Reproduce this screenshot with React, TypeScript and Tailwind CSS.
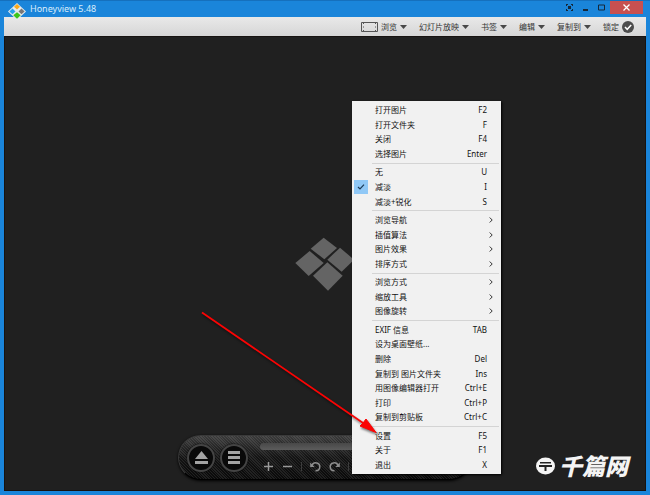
import { useState } from "react";
import clsx from "clsx";

interface MenuEntry {
  label: string;
  shortcut?: string;
  submenu?: boolean;
}

const menuGroups: MenuEntry[][] = [
  [
    { label: "打开图片", shortcut: "F2" },
    { label: "打开文件夹", shortcut: "F" },
    { label: "关闭", shortcut: "F4" },
    { label: "选择图片", shortcut: "Enter" },
  ],
  [
    { label: "无", shortcut: "U" },
    { label: "减淡", shortcut: "I" },
    { label: "减淡+锐化", shortcut: "S" },
  ],
  [
    { label: "浏览导航", submenu: true },
    { label: "插值算法", submenu: true },
    { label: "图片效果", submenu: true },
    { label: "排序方式", submenu: true },
  ],
  [
    { label: "浏览方式", submenu: true },
    { label: "缩放工具", submenu: true },
    { label: "图像旋转", submenu: true },
  ],
  [
    { label: "EXIF 信息", shortcut: "TAB" },
    { label: "设为桌面壁纸..." },
    { label: "删除", shortcut: "Del" },
    { label: "复制到 图片文件夹", shortcut: "Ins" },
    { label: "用图像编辑器打开", shortcut: "Ctrl+E" },
    { label: "打印", shortcut: "Ctrl+P" },
    { label: "复制到剪贴板", shortcut: "Ctrl+C" },
  ],
  [
    { label: "设置", shortcut: "F5" },
    { label: "关于", shortcut: "F1" },
    { label: "退出", shortcut: "X" },
  ],
];

const filters = ["无", "减淡", "减淡+锐化"];

function AppIcon() {
  return (
    <svg width="18" height="17" viewBox="0 0 18 17" aria-hidden="true">
      <path d="M9 0 18 8.500 9 17 0 8.500Z" fill="#e4eaee" />
      <path d="M9 1 12 3.800 9 6.600 6 3.800Z" fill="#f9a91c" />
      <path d="M4.500 5.500 7.500 8.400 4.500 11.300 1.400 8.400Z" fill="#26a3ee" />
      <path d="M13.500 5.500 16.600 8.400 13.500 11.300 10.500 8.400Z" fill="#777" />
      <path d="M9 9.200 12.700 12.300 9 15.700 5.300 12.300Z" fill="#3cc51c" />
    </svg>
  );
}

function TitleBar() {
  return (
    <header className="flex h-4 shrink-0 items-start justify-between pl-1">
      <div className="flex items-start gap-1">
        <div className="z-10 h-4 pt-[2px]">
          <AppIcon />
        </div>
        <h1 className="text-[9px] leading-4 text-[#d9ecfb]">Honeyview 5.48</h1>
      </div>
      <div className="flex items-center pr-[3px]">
        <button type="button" aria-label="Full screen" className="grid h-[13px] w-4 place-items-center">
          <svg width="7" height="7" viewBox="0 0 7 7" fill="#16283a">
            <path d="M0 0h2v1H1v1H0ZM5 0h2v2H6V1H5ZM0 5h1v1h1v1H0ZM6 5h1v2H5V6h1ZM2 2h3v3H2Z" />
          </svg>
        </button>
        <button type="button" aria-label="Minimize" className="grid h-[13px] w-4 place-items-center">
          <svg width="7" height="7" viewBox="0 0 7 7">
            <path d="M1 5h5v2H1Z" fill="#16283a" />
          </svg>
        </button>
        <button type="button" aria-label="Maximize" className="grid h-[13px] w-[17px] place-items-center">
          <svg width="7" height="7" viewBox="0 0 7 7">
            <path d="M.5 1v5h6V1Z" fill="none" stroke="#16283a" />
          </svg>
        </button>
        <button type="button" aria-label="Close" className="grid h-[13px] w-[33px] place-items-center bg-[#c75050]">
          <svg width="7" height="7" viewBox="0 0 7 7">
            <path d="m.5.5 6 6m0-6-6 6" stroke="#fff" strokeWidth="1.3" />
          </svg>
        </button>
      </div>
    </header>
  );
}

function ToolbarButton({ label, film }: { label: string; film?: boolean }) {
  return (
    <button type="button" className="flex items-center gap-[3px]">
      {film && (
        <svg width="17" height="10" viewBox="0 0 17 10" fill="none" stroke="#555">
          <path d="M.5.5h16v9H.5Z" />
          <path d="M2.5 1v8M14.5 1v8" strokeDasharray="1 2.5" />
        </svg>
      )}
      {label}
      <svg width="7" height="4" viewBox="0 0 7 4">
        <path d="M0 0h7L3.5 4Z" fill="#484848" />
      </svg>
    </button>
  );
}

function Toolbar() {
  return (
    <nav className="flex h-[19px] shrink-0 items-center justify-end gap-3 bg-linear-to-b from-[#e9e9e9] to-[#d6d6d6] pr-3 text-[8px] text-[#333]">
      <ToolbarButton label="浏览" film />
      <ToolbarButton label="幻灯片放映" />
      <ToolbarButton label="书签" />
      <ToolbarButton label="编辑" />
      <ToolbarButton label="复制到" />
      <button type="button" className="flex items-center gap-[3px]">
        锁定
        <svg width="12" height="12" viewBox="0 0 12 12">
          <circle cx="6" cy="6" r="6" fill="#4c4c4c" />
          <path d="m3 6 2.2 2.3L9.2 4" fill="none" stroke="#fff" strokeWidth="1.5" />
        </svg>
      </button>
    </nav>
  );
}

function EmptyLogo() {
  return (
    <svg
      className="col-start-1 row-start-1 place-self-center"
      width="60"
      height="54"
      viewBox="0 0 180 162"
      fill="#646464"
      aria-hidden="true"
    >
      <path d="M86 2 126 33 88 67 47 35Z" />
      <path d="M44 42 86 78 41 117 1 78Z" />
      <path d="M135 32 177 68 140 104 97 68Z" />
      <path d="M97 76 143 116 99 161 54 116Z" />
    </svg>
  );
}

const roundButton =
  "grid size-7 shrink-0 place-items-center rounded-full border-2 border-[#444] bg-[#090909] shadow-[0_0_2px_#000]";

function ControlPanel() {
  return (
    <div className="col-start-1 row-start-1 mb-[10px] flex h-[45px] w-[294px] items-center gap-[5px] self-end justify-self-center rounded-full border border-[#3a3a3a] border-b-black bg-[#0b0b0b] bg-[linear-gradient(to_bottom,rgba(255,255,255,0.2),rgba(255,255,255,0.04)_50%,rgba(255,255,255,0)),repeating-linear-gradient(45deg,#0a0a0a_0_1px,#1f1f1f_1px_2px)] px-2 shadow-[0_1px_3px_#000]">
      <button type="button" aria-label="Open" className={roundButton}>
        <svg width="13" height="13" viewBox="0 0 13 13" fill="#a3a3a3">
          <path d="M6.5 0 13 8H0ZM0 10h13v3H0Z" />
        </svg>
      </button>
      <button type="button" aria-label="Menu" className={roundButton}>
        <svg width="12" height="13" viewBox="0 0 12 13" fill="#a3a3a3">
          <path d="M0 0h12v3H0ZM0 5h12v3H0ZM0 10h12v3H0Z" />
        </svg>
      </button>
      <div className="ml-[7px] flex flex-1 flex-col gap-[11px] pr-2">
        <div className="h-[7px] rounded-full bg-linear-to-b from-[#484848] to-[#5c5c5c]" />
        <div className="flex h-[11px] items-center gap-2 pl-[3px]">
          <button type="button" aria-label="Zoom in">
            <svg width="11" height="11" viewBox="0 0 11 11" stroke="#999" strokeWidth="1.5">
              <path d="M5.5 1v9M1 5.5h9" />
            </svg>
          </button>
          <button type="button" aria-label="Zoom out">
            <svg width="11" height="11" viewBox="0 0 11 11" stroke="#999" strokeWidth="1.5">
              <path d="M1 5.5h9" />
            </svg>
          </button>
          <span className="h-[9px] w-px bg-[#3c3c3c]" />
          <button type="button" aria-label="Rotate left">
            <svg width="11" height="11" viewBox="0 0 11 11" fill="none" stroke="#8d8d8d" strokeWidth="1.5">
              <path d="M2 4.5A4 4 0 1 1 5.5 9.8" />
              <path d="M.2 1.5v4.5h4.5Z" fill="#8d8d8d" stroke="none" />
            </svg>
          </button>
          <button type="button" aria-label="Rotate right">
            <svg width="11" height="11" viewBox="0 0 11 11" fill="none" stroke="#8d8d8d" strokeWidth="1.5">
              <path d="M9 4.5A4 4 0 1 0 5.5 9.8" />
              <path d="M10.8 1.5v4.5H6.3Z" fill="#8d8d8d" stroke="none" />
            </svg>
          </button>
          <span className="h-[9px] w-px bg-[#3c3c3c]" />
        </div>
      </div>
    </div>
  );
}

function Watermark() {
  return (
    <div className="absolute right-[17px] bottom-3 flex items-center gap-1 text-[#f4f4f4]">
      <svg width="19" height="18" viewBox="0 0 19 18" aria-hidden="true">
        <ellipse cx="9.5" cy="9" rx="9.5" ry="8.5" fill="#f4f4f4" />
        <path d="M4 5h11v1.500H4ZM3 8h13v2h-5.500v4h-2v-4H3Z" fill="#222" />
      </svg>
      <span className="text-[23px] leading-6 font-black italic">千篇网</span>
    </div>
  );
}

function ContextMenu() {
  const [filter, setFilter] = useState("减淡");

  return (
    <div
      role="menu"
      className="absolute top-[100px] left-[352px] flex h-[373px] w-[149px] flex-col bg-[#f1f1f1] p-[2px] text-[8px] leading-3 text-[#111] shadow-[1px_1px_2px_#000]"
    >
      {menuGroups.map((group, index) => (
        <div key={index} className="contents">
          {index > 0 && (
            <div className="flex h-1 items-center pl-[18px]">
              <div className="h-px w-full bg-[#d4d4d4]" />
            </div>
          )}
          {group.map(({ label, shortcut, submenu }) => (
            <button
              key={label}
              type="button"
              role="menuitem"
              onClick={() => filters.includes(label) && setFilter(label)}
              className="flex min-h-0 flex-1 items-center pr-3 text-left hover:bg-[#90c8f6]"
            >
              <span
                className={clsx(
                  "mr-[7px] grid h-[14px] w-[14px] shrink-0 place-items-center",
                  label === filter && "bg-[#90c8f6]"
                )}
              >
                {label === filter && (
                  <svg width="8" height="6" viewBox="0 0 8 6">
                    <path d="m1 3 2 2 4-4.3" fill="none" stroke="#1b3a57" strokeWidth="1.2" />
                  </svg>
                )}
              </span>
              <span className="flex-1 whitespace-nowrap">{label}</span>
              {shortcut && <span>{shortcut}</span>}
              {submenu && (
                <svg className="-mr-1.5" width="4" height="6" viewBox="0 0 4 6">
                  <path d="m.7.5 2.5 2.5L.7 5.5" fill="none" stroke="#333" />
                </svg>
              )}
            </button>
          ))}
        </div>
      ))}
    </div>
  );
}

function PointerArrow() {
  return (
    <svg
      className="pointer-events-none absolute top-[307px] left-[198px] drop-shadow-[1px_2px_1px_rgba(0,0,0,0.5)]"
      width="182"
      height="130"
      viewBox="198 308 182 130"
      aria-hidden="true"
    >
      <path d="M202 312.5 366 425" stroke="#fb0404" strokeWidth="1.8" />
      <path d="m376 432.5-16-6.5 3-3 3-4Z" fill="#fb0404" stroke="#fb0404" />
    </svg>
  );
}

export default function App() {
  return (
    <div className="relative flex h-screen flex-col overflow-hidden border-t border-[#1570bd] bg-[#1a85da] px-1 pb-1 font-['Noto_Sans','Noto_Sans_CJK_SC',sans-serif]">
      <TitleBar />
      <Toolbar />
      <main className="relative grid min-h-0 flex-1 border border-[#171311] bg-[#202020]">
        <EmptyLogo />
        <ControlPanel />
        <Watermark />
      </main>
      <ContextMenu />
      <PointerArrow />
    </div>
  );
}
